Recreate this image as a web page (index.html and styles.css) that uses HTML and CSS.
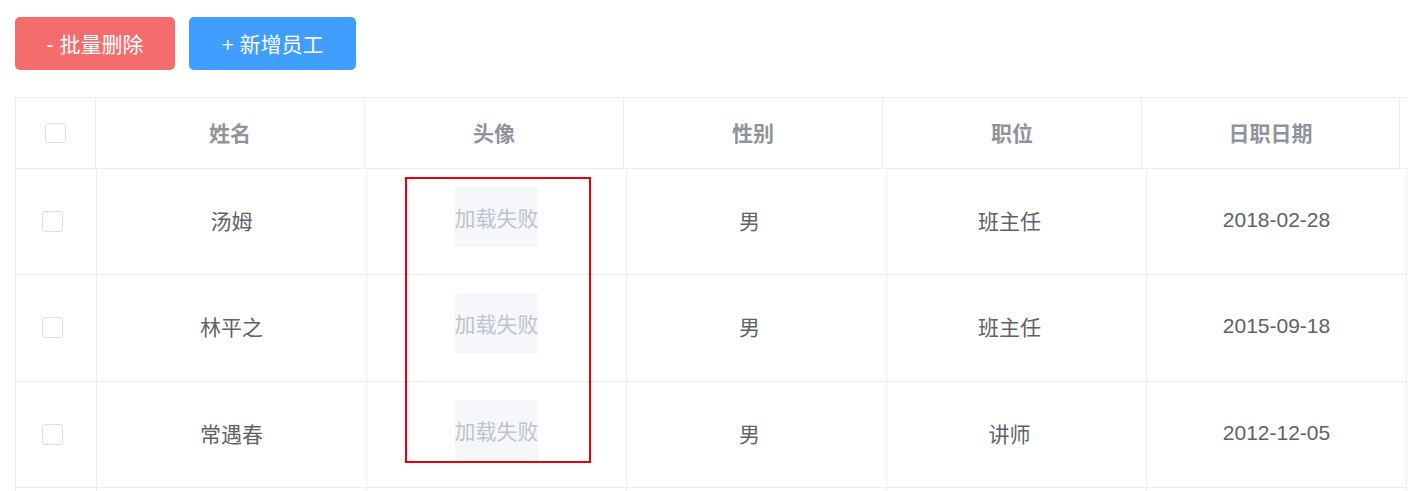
FILE: index.html
```html
<!DOCTYPE html>
<html lang="zh-CN">
<head>
    <meta charset="UTF-8">
    <title>员工管理</title>
    <link rel="stylesheet" href="styles.css">
</head>
<body>
    <div class="toolbar">
        <button class="btn btn-danger">- 批量删除</button>
        <button class="btn btn-primary">+ 新增员工</button>
    </div>

    <div class="table">
        <div class="table-header">
            <div class="cell cell-check"><span class="checkbox"></span></div>
            <div class="cell">姓名</div>
            <div class="cell">头像</div>
            <div class="cell">性别</div>
            <div class="cell">职位</div>
            <div class="cell">日职日期</div>
            <div class="cell gutter"></div>
        </div>

        <div class="table-body">
            <div class="row">
                <div class="cell cell-check"><span class="checkbox"></span></div>
                <div class="cell">汤姆</div>
                <div class="cell cell-avatar"><div class="image-error">加载失败</div></div>
                <div class="cell cell-shift">男</div>
                <div class="cell cell-shift">班主任</div>
                <div class="cell">2018-02-28</div>
            </div>
            <div class="row">
                <div class="cell cell-check"><span class="checkbox"></span></div>
                <div class="cell">林平之</div>
                <div class="cell cell-avatar"><div class="image-error">加载失败</div></div>
                <div class="cell cell-shift">男</div>
                <div class="cell cell-shift">班主任</div>
                <div class="cell">2015-09-18</div>
            </div>
            <div class="row">
                <div class="cell cell-check"><span class="checkbox"></span></div>
                <div class="cell">常遇春</div>
                <div class="cell cell-avatar"><div class="image-error">加载失败</div></div>
                <div class="cell cell-shift">男</div>
                <div class="cell cell-shift">讲师</div>
                <div class="cell">2012-12-05</div>
            </div>
            <div class="row">
                <div class="cell cell-check"><span class="checkbox"></span></div>
                <div class="cell"></div>
                <div class="cell cell-avatar"></div>
                <div class="cell"></div>
                <div class="cell"></div>
                <div class="cell"></div>
            </div>
        </div>

        <!-- highlight around the avatar column -->
        <div class="highlight"></div>
    </div>
</body>
</html>
```

FILE: styles.css
```css
html, body {
    overflow: hidden;
}
body {
    margin: 0;
    padding: 17px 15px 0 15px;
    font-family: "Liberation Sans", "Noto Sans CJK SC", sans-serif;
    color: #606266;
    background: #fff;
}
.toolbar {
    display: flex;
    gap: 14px;
}
.btn {
    height: 53px;
    padding: 0 0 2px;
    border: none;
    border-radius: 5px;
    color: #fff;
    font-family: inherit;
    font-size: 21px;
    cursor: pointer;
}
.btn-danger {
    width: 160px;
    background-color: #f56c6c;
}
.btn-primary {
    width: 167px;
    background-color: #409eff;
}
.table {
    position: relative;
    margin-top: 27px;
    width: 1392px;
    border-top: 1px solid #ebeef5;
    border-left: 1px solid #ebeef5;
}
.table-header {
    display: grid;
    grid-template-columns: 80px 269px 259px 259px 259px 258px 8px;
    height: 71px;
    font-weight: bold;
    color: #909399;
}
.table-body .row {
    display: grid;
    grid-template-columns: 81px 270px 260px 260px 260px 260px;
    height: 106.33px;
}
.cell {
    box-sizing: border-box;
    display: flex;
    align-items: center;
    justify-content: center;
    padding-bottom: 3px;
    border-right: 1px solid #ebeef5;
    border-bottom: 1px solid #ebeef5;
    font-size: 21px;
}
.gutter {
    border-right: none;
}
.cell-check {
    padding-bottom: 0;
}
.table-body .cell-check {
    padding-right: 7px;
}
.table-body .cell-shift {
    padding-right: 14px;
}
.checkbox {
    box-sizing: border-box;
    width: 21px;
    height: 21px;
    border: 1px solid #dcdfe6;
    border-radius: 3px;
    background: #fff;
}
.table-header .checkbox {
    width: 21px;
    height: 20px;
}
.cell-avatar {
    padding-bottom: 9px;
}
.image-error {
    width: 83px;
    height: 60px;
    display: flex;
    align-items: center;
    justify-content: center;
    background: #f5f7fa;
    color: #c0c4cc;
    font-size: 21px;
    white-space: nowrap;
}
.highlight {
    position: absolute;
    left: 389px;
    top: 79px;
    width: 182px;
    height: 282px;
    border: 2px solid #e8000b;
}
```
